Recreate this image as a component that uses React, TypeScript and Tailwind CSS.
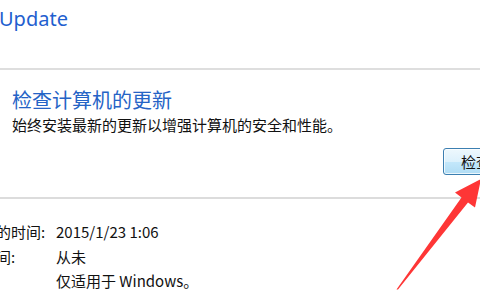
import React from "react";

const cjk = { fontFamily: '"Noto Sans CJK SC", "Noto Sans", sans-serif' };

export default function App() {
  return (
    <div className="relative w-[480px] h-[300px] overflow-hidden bg-white" style={cjk}>
      <div className="h-[68px] pt-[5px]">
        <div
          className="text-[20px] leading-[28px] text-[#1f5fcf] -ml-[1px]"
          style={{ fontFamily: '"Noto Sans", "Open Sans", sans-serif' }}
        >
          Update
        </div>
      </div>
      <div className="h-[2px] bg-[#dedede]" />

      <div className="pl-[12px] pt-[18px]">
        <div className="text-[20px] leading-[24px] text-[#2563c6]">检查计算机的更新</div>
        <div className="mt-[3px] text-[15px] leading-[20px] text-[#111]">
          始终安装最新的更新以增强计算机的安全和性能。
        </div>
      </div>

      <div className="flex justify-end mt-[13px]">
        <button className="mr-[-60px] w-[97px] h-[27px] rounded-[3px] border border-[#3c7fb1] bg-[linear-gradient(to_bottom,#eef8fd_0%,#dcf1fc_50%,#c4e8fb_50%,#b0dcf4_100%)] shadow-[inset_0_0_0_1px_rgba(255,255,255,0.75)] text-left pl-[17px] text-[15px] leading-[25px] text-[#111]">
          检查更新
        </button>
      </div>

      <div className="mt-[22px] h-[2px] bg-[#dcdcdc]" />

      <div className="pt-[21px] text-[15px] leading-[24.5px] text-[#111]">
        <div className="flex">
          <div className="ml-[-94px] w-[150px] shrink-0">最近检查更新的时间:</div>
          <div>2015/1/23 1:06</div>
        </div>
        <div className="flex">
          <div className="ml-[-94px] w-[150px] shrink-0">安装更新的时间:</div>
          <div>从未</div>
        </div>
        <div className="flex">
          <div className="ml-[-94px] w-[150px] shrink-0" />
          <div>仅适用于 Windows。</div>
        </div>
      </div>

      <svg
        className="absolute inset-0 pointer-events-none"
        width="480"
        height="300"
        viewBox="0 0 480 300"
      >
        <polygon
          points="481,179 455,192.5 461.5,197.5 396.5,289.5 398,289.5 468,202.5 475,207.5"
          fill="#fe3636"
        />
      </svg>
    </div>
  );
}
